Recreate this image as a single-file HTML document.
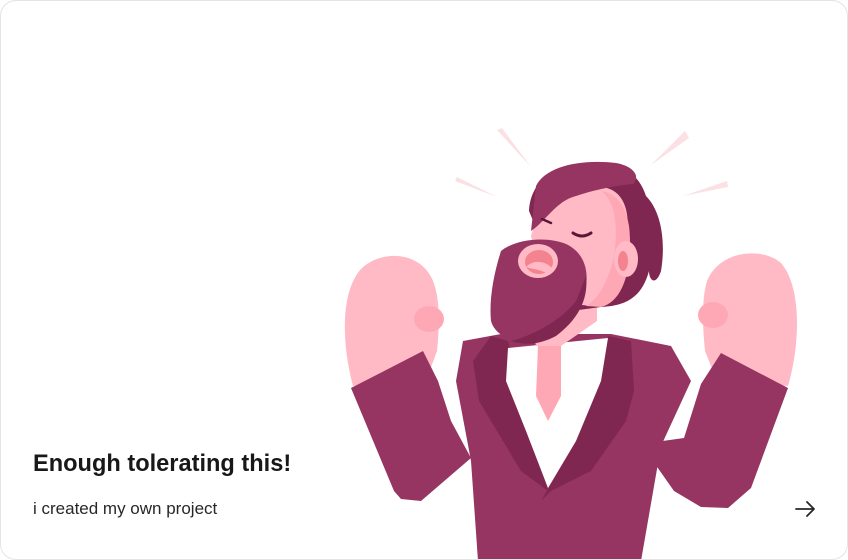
<!DOCTYPE html>
<html><head><style>
html,body{margin:0;padding:0;background:#fff;}
.card{position:absolute;left:0;top:0;width:846px;height:558px;border:1px solid #e4e4e7;border-radius:16px;background:#fff;overflow:hidden;font-family:"Liberation Sans",sans-serif;}
.t{position:absolute;left:32px;top:450px;font-size:23.6px;font-weight:bold;color:#18181b;white-space:nowrap;}
.s{position:absolute;left:32px;top:498px;font-size:17px;color:#27272a;white-space:nowrap;}
svg{position:absolute;left:0;top:0;}
</style></head><body>
<div class="card">
<svg width="848" height="560" viewBox="0 0 848 560">
<polygon points="496,129 501,127 530,166" fill="#fbe0e4"/>
<polygon points="454,180 456,176 496,196" fill="#fbe0e4"/>
<polygon points="684,130 688,137 650,164" fill="#fbe0e4"/>
<polygon points="726,180 727,186 682,195" fill="#fbe0e4"/>
<!-- fists -->
<path d="M352,385 C340,340 340,290 360,268 C380,248 420,250 432,280 C440,300 438,330 436,350 L425,380 Z" fill="#ffbac5"/>
<ellipse cx="428" cy="318" rx="15" ry="13" fill="#ffa8b5"/>
<path d="M787,385 C800,340 800,285 780,262 C760,245 718,250 706,280 C700,300 702,330 704,350 L716,380 Z" fill="#ffbac5"/>
<ellipse cx="712" cy="314" rx="15" ry="13" fill="#ffa8b5"/>
<polygon points="350,387 422,350 437,380 450,420 470,457 420,500 400,498 393,490" fill="#973562"/>
<polygon points="787,387 720,352 700,383 683,437 640,443 673,490 700,506 727,507 750,487" fill="#973562"/>
<path d="M462,340 L500,333 L610,333 L670,345 L690,380 L660,445 L640,560 L477,560 L470,460 L455,380 Z" fill="#973562"/>
<path d="M490,335 L507,340 L530,430 L547,490 L520,470 L478,400 L472,360 Z" fill="#7f2751"/>
<path d="M607,335 L630,340 L633,390 L625,420 L590,470 L550,490 L540,500 L575,440 Z" fill="#7f2751"/>
<path d="M507,347 L607,337 L600,380 L575,440 L547,487 L525,430 L505,380 Z" fill="#fff"/>
<path d="M537,345 L560,343 L560,395 L547,420 L535,395 Z" fill="#ffa8b5"/>
<path d="M530,320 L596,300 L596,320 L560,345 L535,345 Z" fill="#ffbac5"/>
<path d="M528,210 C530,175 560,160 600,162 C630,165 640,180 645,195 C660,210 665,240 660,270 C655,285 648,280 648,270 C640,300 620,305 600,306 L570,310 Z" fill="#7f2751"/>
<path d="M530,235 C540,200 570,185 600,186 C625,188 630,215 625,240 C622,270 610,300 590,305 L545,300 Z" fill="#ffbac5"/>
<path d="M600,190 C615,200 618,230 612,260 C605,285 595,300 585,305 L600,306 C625,300 632,260 628,225 C625,205 615,192 600,190 Z" fill="#ffa8b5"/>
<ellipse cx="625" cy="258" rx="12" ry="18" fill="#ffbac5"/>
<ellipse cx="622" cy="260" rx="5" ry="10" fill="#f3848f"/>
<path d="M535,185 C545,165 580,158 615,162 C632,165 640,175 632,183 C610,185 590,190 575,195 C555,200 545,220 530,230 Z" fill="#973562"/>
<path d="M541,218 L550,222" stroke="#5a1838" stroke-width="2.5" stroke-linecap="round"/>
<path d="M572,232 C578,236 584,236 590,232" stroke="#5a1838" stroke-width="3" fill="none" stroke-linecap="round"/>
<path d="M500,250 C515,238 545,235 565,243 C580,250 588,265 585,285 C580,310 560,325 540,335 C520,345 495,338 490,320 C488,300 492,275 500,250 Z" fill="#973562"/>
<path d="M585,275 C588,300 575,320 555,335 C540,343 525,345 510,340 C530,335 560,320 575,300 Z" fill="#7f2751"/>
<ellipse cx="537" cy="260" rx="20" ry="17" fill="#ffbac5"/>
<ellipse cx="538" cy="261" rx="14" ry="12" fill="#f3848f"/>
<path d="M525,266 C533,258 545,260 552,268 L545,272 C538,268 530,268 525,266 Z" fill="#ffbac5"/>
<path d="M795,508 H813 M806,501 L813,508 L806,515" stroke="#27272a" stroke-width="1.8" fill="none" stroke-linecap="round" stroke-linejoin="round"/>
</svg>
<div class="t">Enough tolerating this!</div>
<div class="s">i created my own project</div>
</div>
</body></html>
